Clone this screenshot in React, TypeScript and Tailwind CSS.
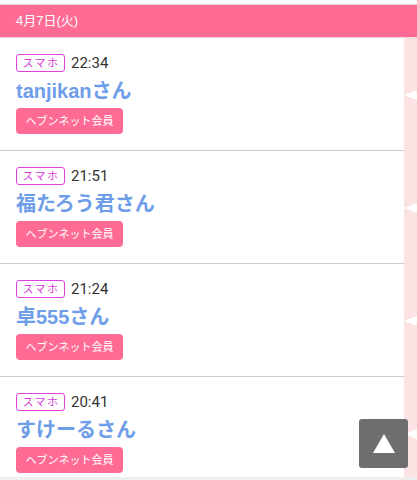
import React from 'react';

const rows = [
  { time: '22:34', name: 'tanjikanさん' },
  { time: '21:51', name: '福たろう君さん' },
  { time: '21:24', name: '卓555さん' },
  { time: '20:41', name: 'すけーるさん' },
];

const font = { fontFamily: '"Liberation Sans", "Noto Sans CJK JP", sans-serif' };

function Row({ time, name }: { time: string; name: string }) {
  return (
    <div className="flex">
      <div className="flex-1 border-b border-[#cccccc] px-4 pt-4 pb-4">
        <div className="flex items-center gap-[6px] h-[18px]">
          <span className="flex h-[18px] w-[49px] items-center justify-center rounded-[3px] border border-[#e23fe0] pl-[1px] text-[11px] leading-none tracking-[1.5px] text-[#d63bd6]">
            スマホ
          </span>
          <span className="text-[15px] leading-none text-[#333333]" style={{ fontFamily: 'Roboto, "Liberation Sans", sans-serif' }}>
            {time}
          </span>
        </div>
        <div className="mt-[4px] text-[20px] leading-[30px] font-bold text-[#6e9de9]">{name}</div>
        <div className="mt-[2px] flex h-[26px] w-[107px] items-center justify-center rounded-[4px] bg-[#ff6b95] text-[11px] text-white">
          ヘブンネット会員
        </div>
      </div>
      <div className="flex w-[13px] items-center bg-[#fde2e3]">
        <svg width="13" height="12" viewBox="0 0 13 12" className="block">
          <polygon points="0,6 13,1 13,11" fill="#ffffff" />
        </svg>
      </div>
    </div>
  );
}

export default function App() {
  return (
    <main className="relative w-[417px] h-[480px] overflow-hidden bg-white" style={font}>
      <div className="h-[4px] bg-white" />
      <div className="border-t border-[#d9d9d9] border-b border-b-[#f3d6de] h-[34px] bg-[#ff6b95] px-4 flex items-center">
        <span className="text-[13px] text-white">4月7日(火)</span>
      </div>
      {rows.map((r) => (
        <Row key={r.time} time={r.time} name={r.name} />
      ))}
      {/* scroll-to-top button floats over the list */}
      <div className="absolute right-[9px] top-[419px] flex h-[49px] w-[49px] items-center justify-center rounded-[3px] bg-[#6e6e6e]">
        <svg width="22" height="19" viewBox="0 0 22 19">
          <polygon points="11,0 22,19 0,19" fill="#ffffff" />
        </svg>
      </div>
      <div className="absolute bottom-0 left-0 h-[3px] w-full bg-[#eeeeee]" />
    </main>
  );
}
